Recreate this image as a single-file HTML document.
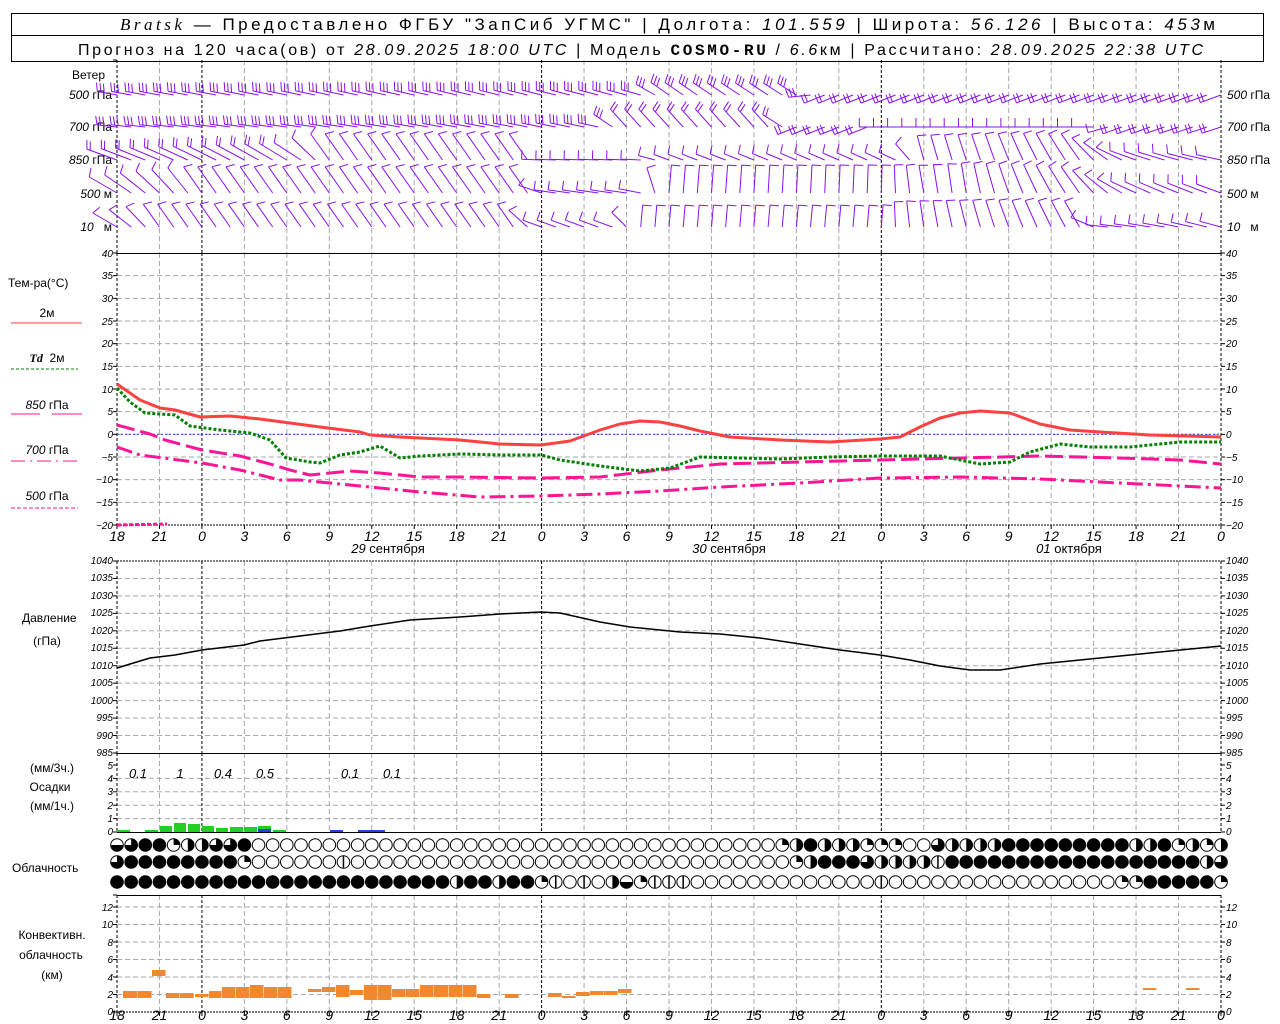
<!DOCTYPE html>
<html><head><meta charset="utf-8"><style>
html,body{margin:0;padding:0;background:#fff;width:1280px;height:1024px;overflow:hidden}
svg{display:block}
text{font-family:"Liberation Sans",sans-serif;fill:#000}
.hl{font-size:14px;font-style:italic;text-anchor:middle}
.al{font-size:10px;font-style:italic;text-anchor:end}
.ar{font-size:10px;font-style:italic;text-anchor:start}
.lb{font-size:12px}
.it{font-style:italic}
</style></head><body>
<svg id="s" width="1280" height="1024" viewBox="0 0 1280 1024" xmlns="http://www.w3.org/2000/svg">
<g id="grid"></g>
<rect x="11.5" y="13.5" width="1252" height="48" fill="none" stroke="#000" stroke-width="1"/>
<line x1="11" y1="35.5" x2="1264" y2="35.5" stroke="#000"/>
<text x="120" y="30" font-size="17" textLength="1095" lengthAdjust="spacing"><tspan font-family="Liberation Serif" font-style="italic">Bratsk</tspan> — Предоставлено ФГБУ "ЗапСиб УГМС" | Долгота: <tspan class="it">101.559</tspan> | Широта: <tspan class="it">56.126</tspan> | Высота: <tspan class="it">453</tspan>м</text>
<text x="78" y="55" font-size="16" textLength="1125" lengthAdjust="spacing">Прогноз на 120 часа(ов) от <tspan class="it">28.09.2025 18:00 UTC</tspan> | Модель <tspan font-family="Liberation Mono" font-weight="bold">COSMO-RU</tspan> / <tspan class="it">6.6</tspan>км | Рассчитано: <tspan class="it">28.09.2025 22:38 UTC</tspan></text>

<g class="lb">
<text x="72" y="79">Ветер</text>
<text x="112" y="99" text-anchor="end"><tspan class="it">500</tspan> гПа</text>
<text x="112" y="131" text-anchor="end"><tspan class="it">700</tspan> гПа</text>
<text x="112" y="164" text-anchor="end"><tspan class="it">850</tspan> гПа</text>
<text x="112" y="198" text-anchor="end"><tspan class="it">500</tspan> м</text>
<text x="112" y="231" text-anchor="end"><tspan class="it">10</tspan>&#160;&#160; м</text>
<text x="1227" y="99"><tspan class="it">500</tspan> гПа</text>
<text x="1227" y="131"><tspan class="it">700</tspan> гПа</text>
<text x="1227" y="164"><tspan class="it">850</tspan> гПа</text>
<text x="1227" y="198"><tspan class="it">500</tspan> м</text>
<text x="1227" y="231"><tspan class="it">10</tspan>&#160;&#160; м</text>
<text x="8" y="287">Тем-ра(°C)</text>
<text x="47" y="317" text-anchor="middle">2м</text>
<text x="47" y="362" text-anchor="middle"><tspan class="it" font-weight="bold" font-family="Liberation Serif">Td</tspan>&#160; 2м</text>
<text x="47" y="409" text-anchor="middle"><tspan class="it">850</tspan> гПа</text>
<text x="47" y="454" text-anchor="middle"><tspan class="it">700</tspan> гПа</text>
<text x="47" y="500" text-anchor="middle"><tspan class="it">500</tspan> гПа</text>
<text x="22" y="622">Давление</text>
<text x="47" y="645" text-anchor="middle">(гПа)</text>
<text x="52" y="772" text-anchor="middle">(мм/3ч.)</text>
<text x="50" y="791" text-anchor="middle">Осадки</text>
<text x="52" y="810" text-anchor="middle">(мм/1ч.)</text>
<text x="12" y="872">Облачность</text>
<text x="52" y="939" text-anchor="middle">Конвективн.</text>
<text x="51" y="959" text-anchor="middle">облачность</text>
<text x="52" y="979" text-anchor="middle">(км)</text>
</g>
<line x1="11" y1="323" x2="82" y2="323" stroke="#ff4040" stroke-width="1"/>
<line x1="11" y1="369" x2="78" y2="369" stroke="#008000" stroke-dasharray="3,2"/>
<line x1="11" y1="414" x2="40" y2="414" stroke="#ff1493"/><line x1="52" y1="414" x2="82" y2="414" stroke="#ff1493"/>
<line x1="11" y1="461" x2="78" y2="461" stroke="#ff1493" stroke-dasharray="14,5,2,5"/>
<line x1="11" y1="508" x2="78" y2="508" stroke="#ff1493" stroke-dasharray="4,2"/>

<g class="al">
<text x="113" y="257">40</text><text x="113" y="279">35</text><text x="113" y="302">30</text><text x="113" y="325">25</text><text x="113" y="347">20</text><text x="113" y="370">15</text><text x="113" y="393">10</text><text x="113" y="415">5</text><text x="113" y="438">0</text><text x="113" y="461">−5</text><text x="113" y="483">−10</text><text x="113" y="506">−15</text><text x="113" y="529">−20</text>
<text x="113" y="564">1040</text><text x="113" y="581">1035</text><text x="113" y="599">1030</text><text x="113" y="616">1025</text><text x="113" y="634">1020</text><text x="113" y="651">1015</text><text x="113" y="669">1010</text><text x="113" y="686">1005</text><text x="113" y="704">1000</text><text x="113" y="721">995</text><text x="113" y="739">990</text><text x="113" y="756">985</text>
<text x="113" y="769">5</text><text x="113" y="782">4</text><text x="113" y="795">3</text><text x="113" y="809">2</text><text x="113" y="822">1</text><text x="113" y="835">0</text>
<text x="113" y="911">12</text><text x="113" y="928">10</text><text x="113" y="946">8</text><text x="113" y="963">6</text><text x="113" y="981">4</text><text x="113" y="998">2</text><text x="113" y="1015">0</text>
</g>
<g class="ar">
<text x="1226" y="257">40</text><text x="1226" y="279">35</text><text x="1226" y="302">30</text><text x="1226" y="325">25</text><text x="1226" y="347">20</text><text x="1226" y="370">15</text><text x="1226" y="393">10</text><text x="1226" y="415">5</text><text x="1226" y="438">0</text><text x="1226" y="461">−5</text><text x="1226" y="483">−10</text><text x="1226" y="506">−15</text><text x="1226" y="529">−20</text>
<text x="1226" y="564">1040</text><text x="1226" y="581">1035</text><text x="1226" y="599">1030</text><text x="1226" y="616">1025</text><text x="1226" y="634">1020</text><text x="1226" y="651">1015</text><text x="1226" y="669">1010</text><text x="1226" y="686">1005</text><text x="1226" y="704">1000</text><text x="1226" y="721">995</text><text x="1226" y="739">990</text><text x="1226" y="756">985</text>
<text x="1226" y="769">5</text><text x="1226" y="782">4</text><text x="1226" y="795">3</text><text x="1226" y="809">2</text><text x="1226" y="822">1</text><text x="1226" y="835">0</text>
<text x="1226" y="911">12</text><text x="1226" y="928">10</text><text x="1226" y="946">8</text><text x="1226" y="963">6</text><text x="1226" y="981">4</text><text x="1226" y="998">2</text><text x="1226" y="1015">0</text>
</g>
<g class="hl">
<text x="117" y="541">18</text><text x="159.5" y="541">21</text><text x="202" y="541">0</text><text x="244.4" y="541">3</text><text x="286.8" y="541">6</text><text x="329.3" y="541">9</text><text x="371.8" y="541">12</text><text x="414.2" y="541">15</text><text x="456.7" y="541">18</text><text x="499.1" y="541">21</text><text x="541.6" y="541">0</text><text x="584.1" y="541">3</text><text x="626.5" y="541">6</text><text x="669" y="541">9</text><text x="711.4" y="541">12</text><text x="753.9" y="541">15</text><text x="796.4" y="541">18</text><text x="838.8" y="541">21</text><text x="881.3" y="541">0</text><text x="923.7" y="541">3</text><text x="966.2" y="541">6</text><text x="1008.7" y="541">9</text><text x="1051.1" y="541">12</text><text x="1093.6" y="541">15</text><text x="1136" y="541">18</text><text x="1178.5" y="541">21</text><text x="1221" y="541">0</text>
<text x="117" y="1020">18</text><text x="159.5" y="1020">21</text><text x="202" y="1020">0</text><text x="244.4" y="1020">3</text><text x="286.8" y="1020">6</text><text x="329.3" y="1020">9</text><text x="371.8" y="1020">12</text><text x="414.2" y="1020">15</text><text x="456.7" y="1020">18</text><text x="499.1" y="1020">21</text><text x="541.6" y="1020">0</text><text x="584.1" y="1020">3</text><text x="626.5" y="1020">6</text><text x="669" y="1020">9</text><text x="711.4" y="1020">12</text><text x="753.9" y="1020">15</text><text x="796.4" y="1020">18</text><text x="838.8" y="1020">21</text><text x="881.3" y="1020">0</text><text x="923.7" y="1020">3</text><text x="966.2" y="1020">6</text><text x="1008.7" y="1020">9</text><text x="1051.1" y="1020">12</text><text x="1093.6" y="1020">15</text><text x="1136" y="1020">18</text><text x="1178.5" y="1020">21</text><text x="1221" y="1020">0</text>
</g>
<g font-size="13" text-anchor="middle">
<text x="388" y="553"><tspan class="it">29</tspan> сентября</text>
<text x="729" y="553"><tspan class="it">30</tspan> сентября</text>
<text x="1069" y="553"><tspan class="it">01</tspan> октября</text>
</g>
<g font-size="13" font-style="italic" text-anchor="middle">
<text x="138" y="778">0.1</text><text x="180" y="778">1</text><text x="223" y="778">0.4</text><text x="265" y="778">0.5</text><text x="350" y="778">0.1</text><text x="392" y="778">0.1</text>
</g>
<g id="dyn"></g>
</svg>
<script>
var NS="http://www.w3.org/2000/svg",G=document.getElementById('grid'),D=document.getElementById('dyn');
function el(p,t,a){var e=document.createElementNS(NS,t);for(var k in a)e.setAttribute(k,a[k]);p.appendChild(e);return e;}
function ln(p,x1,y1,x2,y2,c,w,d){var a={x1:x1,y1:y1,x2:x2,y2:y2,stroke:c,'stroke-width':w||1};if(d)a['stroke-dasharray']=d;return el(p,'line',a);}
var X0=117,X1=1221,ST=(X1-X0)/26;
var panels=[[60,253],[253,525],[561,753],[753,832],[895,1012]];
function hg(ys){ys.forEach(function(y){ln(G,X0,y,X1,y,'#a8a8a8',1,'5,3');});}
var t=[];for(var i=1;i<12;i++)t.push(253+i*22.667);hg(t);
t=[];for(i=1;i<11;i++)t.push(561+i*17.45);hg(t);
t=[];for(i=1;i<5;i++)t.push(832-i*13.4);hg(t);
t=[];for(i=1;i<=6;i++)t.push(1012-i*17.5);hg(t);
panels.forEach(function(p){for(var k=0;k<=26;k++){var x=X0+k*ST;var day=(k%8==2)||k==0||k==26;
 if(day)ln(G,x,p[0],x,p[1],'#000',1,'3,2');else ln(G,x,p[0],x,p[1],'#a8a8a8',1,'5,3');}
 ln(G,X0-4,p[0],X0,p[0],'#000');});
function ticks(ys){ys.forEach(function(y){ln(G,X0-4,y,X0,y,'#000');ln(G,X1,y,X1+4,y,'#000');});}
t=[];for(i=0;i<=12;i++)t.push(253+i*22.667);ticks(t);
t=[];for(i=0;i<=11;i++)t.push(561+i*17.45);ticks(t);
t=[];for(i=0;i<=5;i++)t.push(832-i*13.4);ticks(t);
t=[];for(i=0;i<=6;i++)t.push(1012-i*17.5);ticks(t);
ln(G,X0,253.5,X1,253.5,'#000');ln(G,X0,525,X1,525,'#000',1,'2,1');
ln(G,X0,561,X1,561,'#000',1,'2,1');ln(G,X0,753.5,X1,753.5,'#000');ln(G,X0,832.5,X1,832.5,'#000');
ln(G,X0,895.5,X1,895.5,'#000');ln(G,X0,1012,X1,1012,'#000',1,'2,1');
for(var k=0;k<=26;k++){var x=X0+k*ST;ln(G,x,525,x,529,'#000');ln(G,x,1012,x,1016,'#000');}
function pl(pts,c,w,d){var a={points:pts.map(function(p){return p.join(',')}).join(' '),fill:'none',stroke:c,'stroke-width':w,'stroke-linejoin':'round'};if(d)a['stroke-dasharray']=d;return el(D,'polyline',a);}
ln(D,X0,434.3,X1,434.3,'#2040ff',1,'2,2');
pl([[117,525],[167,524]],'#ff1493',3,'4,2');
pl([[117,447],[140,455],[202,463],[240,470],[280,480],[300,480],[350,485],[380,488],[420,492],[480,497],[541,496],[600,494],[660,491],[720,487],[800,483],[880,478],[960,477],[1040,479],[1120,483],[1221,488]],'#ff1493',3,'16,5,3,5');
pl([[117,425],[150,434],[165,440],[202,450],[240,456],[270,464],[290,470],[310,475],[350,471],[380,473],[420,477],[460,477],[541,478],[600,477],[660,470],[720,464],[800,462],[880,460],[960,458],[1040,456],[1120,458],[1180,460],[1221,464]],'#ff1493',3,'18,6');
pl([[117,388],[130,402],[145,413],[175,415],[190,426],[220,430],[250,433],[270,440],[286,458],[310,462],[320,463],[340,455],[360,452],[380,446],[400,458],[420,456],[460,454],[500,455],[541,455],[560,460],[600,466],[640,471],[670,468],[700,457],[740,458],[780,459],[830,457],[880,456],[910,456],[940,456],[960,460],[980,464],[1010,462],[1030,452],[1060,444],[1090,447],[1130,447],[1180,442],[1221,442]],'#008000',3,'3,2');
pl([[117,384],[140,400],[160,408],[175,410],[200,417],[230,416],[260,419],[290,423],[320,427],[360,432],[370,435],[400,437],[460,440],[500,444],[541,445],[570,441],[600,430],[620,424],[640,421],[660,422],[680,426],[700,431],[730,437],[780,440],[830,442],[880,439],[900,437],[920,427],[940,418],[960,413],[980,411],[1010,413],[1040,424],[1070,430],[1100,432],[1150,435],[1221,437]],'#ff4040',3);
pl([[117,668],[150,658],[175,655],[202,650],[244,645],[260,641],[300,636],[340,631],[370,626],[410,620],[460,617],[500,614],[541,612],[560,613],[600,622],[630,627],[680,632],[720,634],[760,638],[800,644],[840,650],[880,655],[910,660],[940,666],[970,670],[1000,670],[1040,664],[1100,658],[1150,653],[1221,646]],'#000',1.5);
[[117,130,2],[145,158,2],[160,172,6],[174,186,9],[188,200,8],[202,214,6],[216,228,4],[230,243,5],[244,257,5],[258,271,6],[273,286,2]].forEach(function(b){el(D,'rect',{x:b[0],y:832-b[2],width:b[1]-b[0],height:b[2],fill:'#20d020'});});
[[258,271,3],[330,343,2],[358,385,2]].forEach(function(b){el(D,'rect',{x:b[0],y:832-b[2],width:b[1]-b[0],height:b[2],fill:'#2040e0'});});
[[123,138,991,998],[138,152,991,998],[152,166,970,976],[166,180,993,998],[180,194,993,998],[195,209,994,997],[209,222,991,998],[222,236,987,998],[236,250,987,998],[250,264,985,998],[264,278,987,998],[278,292,987,998],[308,322,989,992],[322,336,987,992],[336,350,985,997],[350,364,990,995],[364,378,985,1000],[378,392,985,1000],[392,406,989,997],[406,420,989,997],[420,434,985,997],[434,449,985,997],[449,463,985,997],[463,477,985,997],[477,491,994,998],[505,519,994,998],[548,562,993,997],[562,576,996,998],[576,590,992,996],[590,604,991,995],[604,618,991,995],[618,632,989,993],[1143,1157,988,990],[1186,1200,988,990]].forEach(function(b){el(D,'rect',{x:b[0],y:b[2],width:b[1]-b[0]-0.5,height:b[3]-b[2],fill:'#f08830'});});
var rows=[[845,"ctbbqhhttbwwwwwwwwwwwwwwwwwwwwwwwwwwwwwwwwwwwwwqhbhhhqqqwwthhhhbbbbbbbbbhhbqhqhw"],
[862,"tbbbbbbbbqwwwwwwvwwwwwwwwwwwwwwwwwwwwwwwwwwwwwwwqhbbbthhhhvbbbbbbbbbbbbbbbbbbhtb"],
[882,"bbbbbbbbbbbbbbbbbbbbbbbbhbbhbbqvwvwhcqvvvwwwwwwwwwwwwwvwwwwwwwwwwwwwwwwqqbbbbbqw"]];
rows.forEach(function(r){var y=r[0];for(var i=0;i<79;i++){var x=X0+i*14.154,c=r[1][i]||'w',R=6.3;
 if(c=='b'){el(D,'circle',{cx:x,cy:y,r:R,fill:'#000',stroke:'#000'});continue;}
 el(D,'circle',{cx:x,cy:y,r:R,fill:'#fff',stroke:'#000'});
 if(c=='h')el(D,'path',{d:'M'+x+','+(y-R)+' A'+R+','+R+' 0 0 1 '+x+','+(y+R)+' Z',fill:'#000'});
 if(c=='q')el(D,'path',{d:'M'+x+','+y+' L'+x+','+(y-R)+' A'+R+','+R+' 0 0 1 '+(x+R)+','+y+' Z',fill:'#000'});
 if(c=='t')el(D,'path',{d:'M'+x+','+y+' L'+x+','+(y-R)+' A'+R+','+R+' 0 1 1 '+(x-R)+','+y+' Z',fill:'#000'});
 if(c=='c')el(D,'path',{d:'M'+(x-R)+','+y+' A'+R+','+R+' 0 0 0 '+(x+R)+','+y+' Z',fill:'#000'});
 if(c=='v')ln(D,x,y-R,x,y+R,'#000',1.5);
}});
var WC='#8a10f0';
var W=[[95,[[117,190,20,3,75],[640,195,20,3,75],[660,215,22,3,75],[800,212,22,3,75],[815,158,22,2,90],[1221,160,22,2,90]]],
[127,[[117,186,20,3,75],[600,192,20,3,75],[620,228,24,2,75],[780,228,24,2,75],[790,158,20,2,90],[870,158,20,2,90],[880,180,22,1,90],[1100,180,22,1,90],[1110,160,20,2,90],[1221,162,20,2,90]]],
[160,[[117,200,32,2,70],[300,212,32,1,70],[330,235,32,1,110],[530,235,32,1,110],[540,182,20,1,90],[640,182,20,1,90],[660,200,16,1,80],[900,205,18,1,80],[920,255,25,1,100],[1000,250,28,1,100],[1080,235,32,1,110],[1130,200,28,1,70],[1221,192,25,1,70]]],
[193,[[117,210,32,1,70],[200,235,32,1,110],[530,235,32,1,110],[545,188,22,1,90],[640,188,22,1,90],[660,275,28,1,90],[880,272,28,1,90],[920,260,28,1,100],[960,262,30,1,90],[1080,235,32,1,110],[1130,205,28,1,70],[1221,200,26,1,70]]],
[227,[[117,210,28,1,110],[160,235,28,1,110],[520,235,28,1,110],[540,200,20,1,90],[620,200,20,1,90],[640,275,22,1,90],[880,275,22,1,90],[900,265,26,1,100],[1080,240,30,1,100],[1100,185,22,1,90],[1221,195,22,1,90]]]];
W.forEach(function(r){var y=r[0],K=r[1];
 for(var i=0;i<79;i++){var x=X0+i*14.154,j=0;while(j<K.length-2&&K[j+1][0]<=x)j++;
  var a=K[j],b=K[j+1],f=Math.max(0,Math.min(1,(x-a[0])/(b[0]-a[0]))),th=(a[1]+(b[1]-a[1])*f)*Math.PI/180,L=a[2]+(b[2]-a[2])*f,n=a[3],ph=a[4]*Math.PI/180;
  var tx=x+L*Math.cos(th),ty=y+L*Math.sin(th);
  var d='M'+x.toFixed(1)+','+y+' L'+tx.toFixed(1)+','+ty.toFixed(1);
  for(var m=0;m<n;m++){var px=tx-m*3.5*Math.cos(th),py=ty-m*3.5*Math.sin(th);
   d+=' M'+px.toFixed(1)+','+py.toFixed(1)+' l'+(9*Math.cos(th+ph)).toFixed(1)+','+(9*Math.sin(th+ph)).toFixed(1);}
  el(D,'path',{d:d,stroke:WC,'stroke-width':1,fill:'none'});
 }});
</script>
</body></html>
